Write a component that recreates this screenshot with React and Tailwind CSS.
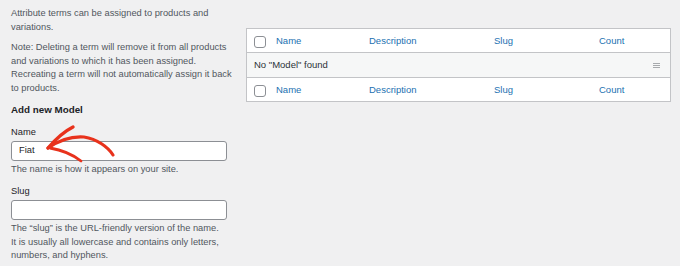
import React from 'react'

const font = { fontFamily: '"Liberation Sans", Arial, sans-serif' }

const Checkbox = () => (
    <span className="block w-[12px] h-[12px] mt-[3px] rounded-[3px] border border-[#8c8f94] bg-white shrink-0" />
)

const HeadRow = ({ border }) => (
    <div className={`flex items-center h-[24px] bg-white text-[9.5px] ${border}`}>
        <div className="w-[29px] pl-[7px] shrink-0">
            <Checkbox />
        </div>
        <div className="w-[93px] text-[#2271b1]">Name</div>
        <div className="w-[125px] text-[#2271b1]">Description</div>
        <div className="w-[105px] text-[#2271b1]">Slug</div>
        <div className="text-[#2271b1]">Count</div>
    </div>
)

const Arrow = () => (
    <svg
        className="absolute left-[40px] top-[120px] pointer-events-none"
        width="80"
        height="48"
        viewBox="40 120 80 48"
        fill="none"
    >
        <path
            d="M48 148 C 58 141, 70 136, 84 137 C 97 139, 108 147, 113 155"
            stroke="#e8321c"
            strokeWidth="3.2"
            strokeLinecap="round"
        />
        <path d="M48 148 C 55 140, 63 132, 73 127" stroke="#e8321c" strokeWidth="3.4" strokeLinecap="round" />
        <path d="M50 148 C 62 150, 72 154, 81 161" stroke="#e8321c" strokeWidth="2.8" strokeLinecap="round" />
    </svg>
)

export default function App() {
    return (
        <div className="relative w-[680px] h-[266px] overflow-hidden bg-[#f0f0f1] text-[9.3px] leading-[13.5px]" style={font}>
            <div className="flex">
                {/* left: add form */}
                <div className="w-[235px] shrink-0 pl-[11px] pt-[7px] text-[#50575e]">
                    <p>Attribute terms can be assigned to products and variations.</p>
                    <p className="mt-[7px]">
                        Note: Deleting a term will remove it from all products and variations to which it has been assigned. Recreating a term will not automatically assign it back to products.
                    </p>
                    <h2 className="mt-[8px] text-[9.8px] leading-[14px] font-bold text-[#1d2327]">Add new Model</h2>

                    <label className="block mt-[9px] text-[#1d2327]">Name</label>
                    <div className="mt-[1.5px] w-[216px] h-[20px] rounded-[3px] border border-[#8c8f94] bg-white flex items-center px-[7px] text-[#1d2327]">
                        Fiat
                    </div>
                    <p className="mt-[2px]">The name is how it appears on your site.</p>

                    <label className="block mt-[8.5px] text-[#1d2327]">Slug</label>
                    <div className="mt-[1px] w-[216px] h-[20px] rounded-[3px] border border-[#8c8f94] bg-white" />
                    <p className="mt-[2.5px]">
                        The “slug” is the URL-friendly version of the name.
                        <br />
                        It is usually all lowercase and contains only letters, numbers, and hyphens.
                    </p>
                </div>

                {/* right: terms table */}
                <div className="ml-[11px] mt-[28px] w-[425px] self-start border border-[#c3c4c7] bg-white">
                    <HeadRow border="border-b border-[#c3c4c7]" />
                    <div className="flex items-center justify-between h-[24px] bg-[#f6f7f7] pl-[7px] pr-[10px] text-[9.5px] text-[#2c3338]">
                        <span>No "Model" found</span>
                        <span className="flex flex-col gap-[1px]">
                            <span className="block w-[7px] h-[1px] bg-[#a7aaad]" />
                            <span className="block w-[7px] h-[1px] bg-[#a7aaad]" />
                            <span className="block w-[7px] h-[1px] bg-[#a7aaad]" />
                        </span>
                    </div>
                    <HeadRow border="border-t border-[#c3c4c7]" />
                </div>
            </div>
            <Arrow />
        </div>
    )
}
